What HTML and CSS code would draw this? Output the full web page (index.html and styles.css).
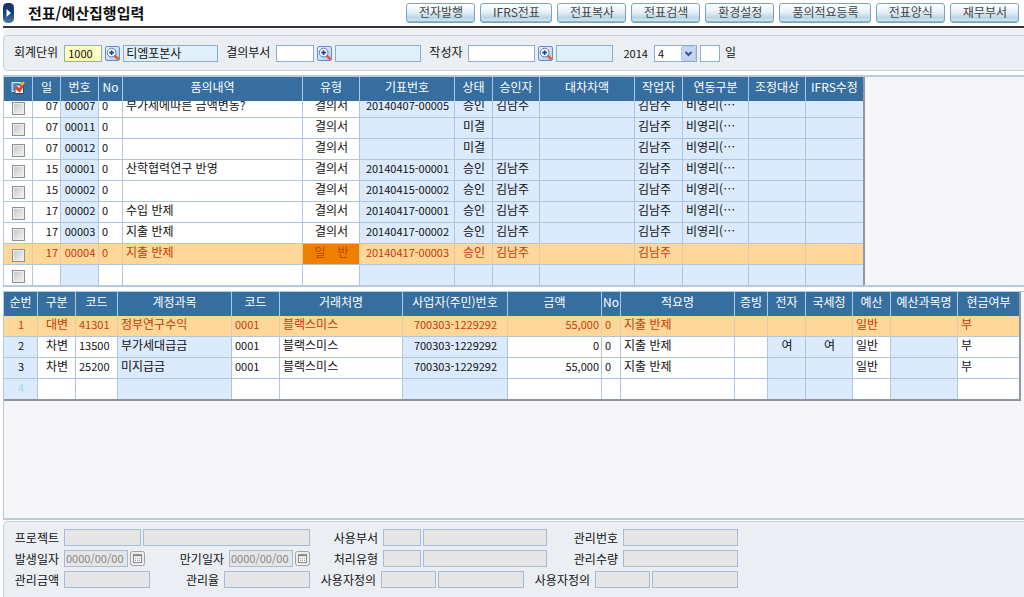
FILE: index.html
```html
<!DOCTYPE html>
<html lang="ko">
<head>
<meta charset="utf-8">
<title>전표/예산집행입력</title>
<link rel="stylesheet" href="styles.css">
</head>
<body>
<svg class="defs" width="0" height="0" aria-hidden="true">
  <defs>
    <linearGradient id="pill" x1="0" y1="0" x2="0" y2="1"><stop offset="0" stop-color="#1c2f66"/><stop offset="0.5" stop-color="#12407c"/><stop offset="1" stop-color="#4f7fb4"/></linearGradient>
    <linearGradient id="face" x1="0" y1="0" x2="1" y2="1"><stop offset="0" stop-color="#f4f9ff"/><stop offset="1" stop-color="#a9c8f2"/></linearGradient>
  </defs>
  <symbol id="search" viewBox="0 0 15 15">
    <rect x="0.5" y="0.5" width="14" height="14" rx="1.5" fill="url(#face)" stroke="#5c8ed2"/>
    <path d="M10 10l2.700 2.700" stroke="#e2621b" stroke-width="2.6" stroke-linecap="round"/>
    <circle cx="6.6" cy="6.6" r="4.4" fill="#fff" stroke="#4a76bd" stroke-width="1"/>
    <path d="M6.6 4.2v4.8M4.2 6.6h4.8" stroke="#1a3fa8" stroke-width="1.6"/>
  </symbol>
  <symbol id="calendar" viewBox="0 0 15 15">
    <rect x="0.5" y="0.5" width="14" height="14" rx="2" fill="#ececec" stroke="#a2a2a2"/>
    <rect x="3.5" y="3.5" width="8" height="8" fill="#fff" stroke="#8b8b8b"/>
    <path d="M3 4.5h9" stroke="#8b8b8b" stroke-width="1.5"/>
    <path d="M5 7.5h5M5 9.5h5" stroke="#999" stroke-dasharray="1 1"/>
  </symbol>
</svg>

<header class="top">
  <svg class="mark" width="11" height="20" viewBox="0 0 11 20" aria-hidden="true"><rect width="11" height="20" rx="4.5" fill="url(#pill)"/><path d="M3.5 6l4.5 4-4.500 4z" fill="#fff"/></svg>
  <h1>전표/예산집행입력</h1>
  <nav class="actions">
    <button>전자발행</button><button>IFRS전표</button><button>전표복사</button><button>전표검색</button><button>환경설정</button><button>품의적요등록</button><button>전표양식</button><button>재무부서</button>
  </nav>
</header>

<form class="filter">
  <label for="unit">회계단위</label>
  <div class="set"><input id="unit" class="w38 key" value="1000"><button type="button" class="icon" aria-label="회계단위 검색"><svg><use href="#search"/></svg></button><input class="w95 ro" value="티엠포본사" aria-label="회계단위명" readonly></div>
  <label for="dept">결의부서</label>
  <div class="set"><input id="dept" class="w38"><button type="button" class="icon" aria-label="결의부서 검색"><svg><use href="#search"/></svg></button><input class="w86 ro" aria-label="결의부서명" readonly></div>
  <label for="writer">작성자</label>
  <div class="set"><input id="writer" class="w67"><button type="button" class="icon" aria-label="작성자 검색"><svg><use href="#search"/></svg></button><input class="w57 ro" aria-label="작성자명" readonly></div>
  <span class="year">2014</span>
  <div class="set day"><span class="pick"><select aria-label="월"><option>4</option></select><svg class="arrow" width="15" height="15" viewBox="0 0 15 15" aria-hidden="true"><rect x="0.5" y="0.5" width="14" height="14" rx="1.5" fill="#c6d6fb" stroke="#b3c6ee"/><path d="M4.500 6l3 3 3-3" fill="none" stroke="#3c5286" stroke-width="2"/></svg></span><input id="day" class="w20"></div>
  <label for="day">일</label>
</form>

<section class="pane">
  <div class="grid vouchers">
    <table class="head">
      <colgroup><col class="c29"><col class="c28"><col class="c38"><col class="c24"><col class="c180"><col class="c57"><col class="c95"><col class="c38"><col class="c47"><col class="c95"><col class="c48"><col class="c66"><col class="c57"><col class="c57"></colgroup>
      <thead><tr><th><svg class="pickall" width="14" height="14" viewBox="0 0 14 14" role="img" aria-label="전체선택"><path d="M1 1.500h9v9H1z" fill="#5fa4e0" stroke="#cfe6fa"/><path d="M4 4h8.500v8.500H4z" fill="#f3f6fb" stroke="#274b78"/><path d="M4.500 6l4 3.500L12 3" fill="none" stroke="#e2401c" stroke-width="3"/><path d="M10.500 4l2.500-3" stroke="#ffb52e" stroke-width="2"/></svg></th><th>일</th><th>번호</th><th>No</th><th>품의내역</th><th>유형</th><th>기표번호</th><th>상태</th><th>승인자</th><th>대차차액</th><th>작업자</th><th>연동구분</th><th>조정대상</th><th>IFRS수정</th></tr></thead>
    </table>
    <div class="scroll">
    <table class="body">
      <colgroup><col class="c29"><col class="c28"><col class="c38"><col class="c24"><col class="c180"><col class="c57"><col class="c95"><col class="c38"><col class="c47"><col class="c95"><col class="c48"><col class="c66"><col class="c57"><col class="c57"></colgroup>
      <tbody>
      <tr><td><input type="checkbox" aria-label="선택"></td><td>07</td><td>00007</td><td>0</td><td>부가세에따른 금액변동?</td><td>결의서</td><td>20140407-00005</td><td>승인</td><td>김남주</td><td></td><td>김남주</td><td>비영리(⋯</td><td></td><td></td></tr>
      <tr><td><input type="checkbox" aria-label="선택"></td><td>07</td><td>00011</td><td>0</td><td></td><td>결의서</td><td></td><td>미결</td><td></td><td></td><td>김남주</td><td>비영리(⋯</td><td></td><td></td></tr>
      <tr><td><input type="checkbox" aria-label="선택"></td><td>07</td><td>00012</td><td>0</td><td></td><td>결의서</td><td></td><td>미결</td><td></td><td></td><td>김남주</td><td>비영리(⋯</td><td></td><td></td></tr>
      <tr><td><input type="checkbox" aria-label="선택"></td><td>15</td><td>00001</td><td>0</td><td>산학협력연구 반영</td><td>결의서</td><td>20140415-00001</td><td>승인</td><td>김남주</td><td></td><td>김남주</td><td>비영리(⋯</td><td></td><td></td></tr>
      <tr><td><input type="checkbox" aria-label="선택"></td><td>15</td><td>00002</td><td>0</td><td></td><td>결의서</td><td>20140415-00002</td><td>승인</td><td>김남주</td><td></td><td>김남주</td><td>비영리(⋯</td><td></td><td></td></tr>
      <tr><td><input type="checkbox" aria-label="선택"></td><td>17</td><td>00002</td><td>0</td><td>수입 반제</td><td>결의서</td><td>20140417-00001</td><td>승인</td><td>김남주</td><td></td><td>김남주</td><td>비영리(⋯</td><td></td><td></td></tr>
      <tr><td><input type="checkbox" aria-label="선택"></td><td>17</td><td>00003</td><td>0</td><td>지출 반제</td><td>결의서</td><td>20140417-00002</td><td>승인</td><td>김남주</td><td></td><td>김남주</td><td>비영리(⋯</td><td></td><td></td></tr>
      <tr class="sel"><td><input type="checkbox" aria-label="선택"></td><td>17</td><td>00004</td><td>0</td><td>지출 반제</td><td class="focus">일&emsp;반</td><td>20140417-00003</td><td>승인</td><td>김남주</td><td></td><td>김남주</td><td></td><td></td><td></td></tr>
      <tr><td><input type="checkbox" aria-label="선택"></td><td></td><td></td><td></td><td></td><td></td><td></td><td></td><td></td><td></td><td></td><td></td><td></td><td></td></tr>
      </tbody>
    </table>
    </div>
  </div>
</section>

<section class="pane lower">
  <div class="grid lines">
    <table class="head body">
      <colgroup><col class="c34"><col class="c38"><col class="c42"><col class="c114"><col class="c48"><col class="c123"><col class="c105"><col class="c94"><col class="c19"><col><col class="c33"><col class="c38"><col class="c47"><col class="c38"><col class="c67"><col class="c61"></colgroup>
      <thead><tr><th>순번</th><th>구분</th><th>코드</th><th>계정과목</th><th>코드</th><th>거래처명</th><th>사업자(주민)번호</th><th>금액</th><th>No</th><th>적요명</th><th>증빙</th><th>전자</th><th>국세청</th><th>예산</th><th>예산과목명</th><th>현금여부</th></tr></thead>
      <tbody>
      <tr class="sel"><td>1</td><td>대변</td><td>41301</td><td>정부연구수익</td><td>0001</td><td>블랙스미스</td><td>700303-1229292</td><td>55,000</td><td>0</td><td>지출 반제</td><td></td><td></td><td></td><td>일반</td><td></td><td>부</td></tr>
      <tr><td>2</td><td>차변</td><td>13500</td><td>부가세대급금</td><td>0001</td><td>블랙스미스</td><td>700303-1229292</td><td>0</td><td>0</td><td>지출 반제</td><td></td><td>여</td><td>여</td><td>일반</td><td></td><td>부</td></tr>
      <tr><td>3</td><td>차변</td><td>25200</td><td>미지급금</td><td>0001</td><td>블랙스미스</td><td>700303-1229292</td><td>55,000</td><td>0</td><td>지출 반제</td><td></td><td></td><td></td><td>일반</td><td></td><td>부</td></tr>
      <tr><td class="next">4</td><td></td><td></td><td></td><td></td><td></td><td></td><td></td><td></td><td></td><td></td><td></td><td></td><td></td><td></td><td></td></tr>
      </tbody>
    </table>
  </div>
</section>

<form class="detail">
  <div class="row">
    <div class="group g296"><label for="project">프로젝트</label><input id="project" class="w77" disabled><input class="w167" aria-label="프로젝트명" disabled></div>
    <div class="group g237"><label for="usedept">사용부서</label><input id="usedept" class="w38" disabled><input class="w124" aria-label="사용부서명" disabled></div>
    <div class="group g191"><label for="mno">관리번호</label><input id="mno" class="w115" disabled></div>
  </div>
  <div class="row">
    <div class="group g131"><label for="from">발생일자</label><input id="from" class="w64" value="0000/00/00" disabled><button type="button" class="icon" aria-label="발생일자 달력" disabled><svg><use href="#calendar"/></svg></button></div>
    <div class="group g165"><label for="due">만기일자</label><input id="due" class="w64" value="0000/00/00" disabled><button type="button" class="icon" aria-label="만기일자 달력" disabled><svg><use href="#calendar"/></svg></button></div>
    <div class="group g237"><label for="kind">처리유형</label><input id="kind" class="w38" disabled><input class="w124" aria-label="처리유형명" disabled></div>
    <div class="group g191"><label for="qty">관리수량</label><input id="qty" class="w115" disabled></div>
  </div>
  <div class="row">
    <div class="group g136"><label for="amt">관리금액</label><input id="amt" class="w86" disabled></div>
    <div class="group g160"><label for="rate">관리율</label><input id="rate" class="w86" disabled></div>
    <div class="group g214"><label for="ud1">사용자정의</label><input id="ud1" class="w55" disabled><input class="w86" aria-label="사용자정의명 1" disabled></div>
    <div class="group g214"><label for="ud2">사용자정의</label><input id="ud2" class="w55" disabled><input class="w86" aria-label="사용자정의명 2" disabled></div>
  </div>
</form>
</body>
</html>
```

FILE: styles.css
```css
* { box-sizing: border-box; }

html { height: 100%; }

body {
  margin: 0;
  padding-left: 3px;
  min-height: 100%;
  display: flex;
  flex-direction: column;
  background: #fff;
  color: #111;
  font: 12px/16px "Noto Sans CJK KR", sans-serif;
}

input, select, button { font: inherit; color: inherit; margin: 0; }
.defs { display: block; height: 0; }

/* title bar */
.top {
  display: flex;
  align-items: center;
  height: 28px;
  padding-right: 5px;
  border-bottom: 2px solid #33333f;
}
.top h1 {
  margin: 0 auto 0 14px;
  font-size: 15px;
  line-height: 20px;
  font-weight: bold;
}
.actions { display: flex; gap: 5px; }
.actions button {
  height: 20px;
  padding: 0 11px 3px 12px;
  border: 1px solid #7fa3bd;
  border-radius: 3px;
  background: linear-gradient(#fff 0%, #e6f1f8 45%, #b9d5e6 75%, #d5edf5 100%);
  box-shadow: inset 0 -1px #8fb3c9;
  color: #444;
  line-height: 14px;
}

/* search conditions */
.filter {
  display: flex;
  align-items: center;
  margin-top: 7px;
  height: 36px;
  padding-left: 10px;
  border: 1px solid #c2d0de;
  border-right: 0;
  border-radius: 5px 0 0 5px;
  background: #ebeef3;
  box-shadow: 0 -6px #eef0f4;
}
.filter label { line-height: 18px; padding-bottom: 2px; }
.set { display: flex; align-items: center; gap: 3px; margin: 0 8px 0 6px; }
.set.day { margin-right: 5px; }
.year { margin-left: 2px; font-size: 11px; }
input:not([type="checkbox"]), select {
  height: 17px;
  padding: 0 3px 1px;
  border: 1px solid #8fadd0;
  border-radius: 0;
  background: #fff;
  line-height: 14px;
}
input.key, .pick select { font-size: 11px; }
input.key { background: #ffffc4; }
input.ro { background: #e0f0fa; padding: 0 2px 1px; }
.icon {
  width: 15px;
  height: 15px;
  padding: 0;
  border: 0;
  background: none;
}
.icon svg { display: block; width: 15px; height: 15px; }
.pick { display: grid; width: 43px; }
.pick > * { grid-area: 1 / 1; }
.pick select { appearance: none; width: 43px; }
.arrow { place-self: center end; margin-right: 1px; pointer-events: none; }

.w20 { width: 20px; }
.w38 { width: 38px; }
.w55 { width: 55px; }
.w57 { width: 57px; }
.w64 { width: 64px; }
.w67 { width: 67px; }
.w77 { width: 77px; }
.w86 { width: 86px; }
.w95 { width: 95px; }
.w115 { width: 115px; }
.w124 { width: 124px; }
.w167 { width: 167px; }

/* grids */
.pane {
  display: flex;
  align-items: flex-start;
  margin-top: 4px;
  border: solid #b7cbdf;
  border-width: 2px 0 2px 1px;
  background: #f6f6f9;
}
.pane.lower { flex: 1; padding-right: 3px; border-top-width: 1px; }
.grid { border-right: 2px solid #8f9aa6; }
.lines { flex: 1; border-bottom: 2px solid #8f9498; }
.scroll { overflow: hidden; }
.scroll table { margin-top: -4px; }
table { table-layout: fixed; border-collapse: separate; border-spacing: 0; }
.vouchers table { width: 859px; }
.lines table { width: 100%; }
th {
  height: 24px;
  padding: 0 0 4px;
  border-right: 1px solid #a9cbe8;
  background: #366e9f;
  color: #fff;
  font-weight: normal;
  white-space: nowrap;
  overflow: hidden;
}
td {
  height: 21px;
  padding: 0 2px 4px 3px;
  border-right: 1px solid #aec6e0;
  border-bottom: 1px solid #aec6e0;
  background: #fff;
  white-space: nowrap;
  overflow: hidden;
}
th:last-child, td:last-child { border-right: 0; }
tbody tr:last-child td { height: 20px; border-bottom: 0; }
.vouchers td:first-child { padding-bottom: 2px; }
.pickall { display: block; margin: 2px auto 0; }

/* number columns */
.vouchers td:nth-child(2), .vouchers td:nth-child(3), .vouchers td:nth-child(4), .vouchers td:nth-child(7),
.lines td:nth-child(1), .lines td:nth-child(3), .lines td:nth-child(5),
.lines td:nth-child(7), .lines td:nth-child(8), .lines td:nth-child(9) {
  font-size: 11px;
}

.vouchers td:nth-child(1), .vouchers td:nth-child(3), .vouchers td:nth-child(6),
.vouchers td:nth-child(7), .vouchers td:nth-child(8) { text-align: center; }
.vouchers td:nth-child(2) { text-align: right; }
.vouchers td:nth-child(3), .vouchers td:nth-child(n+7) { background: #dbeafc; }

.lines td:nth-child(1), .lines td:nth-child(2), .lines td:nth-child(7),
.lines td:nth-child(12), .lines td:nth-child(13) { text-align: center; }
.lines td:nth-child(8) { text-align: right; }
.lines td:nth-child(1), .lines td:nth-child(4), .lines td:nth-child(7),
.lines td:nth-child(12), .lines td:nth-child(13), .lines td:nth-child(15) { background: #dbeafc; }
.lines td.next { color: #a5d8dc; }

.grid .sel td:nth-child(n) { background: #ffd799; color: #c23c06; border-right-color: #dfcbac; }
.grid .sel td.focus:nth-child(n) { background: #ee8000; }

input[type="checkbox"] {
  appearance: none;
  display: block;
  width: 13px;
  height: 13px;
  margin: 4px auto 0;
  border: 1px solid #8e8f8f;
  background: linear-gradient(135deg, #c4c6ca, #f5f5f5);
  box-shadow: inset 0 0 0 1px #eee;
}

.c19 { width: 19px; }
.c24 { width: 24px; }
.c28 { width: 28px; }
.c29 { width: 29px; }
.c33 { width: 33px; }
.c34 { width: 34px; }
.c38 { width: 38px; }
.c42 { width: 42px; }
.c47 { width: 47px; }
.c48 { width: 48px; }
.c57 { width: 57px; }
.c61 { width: 61px; }
.c66 { width: 66px; }
.c67 { width: 67px; }
.c94 { width: 94px; }
.c95 { width: 95px; }
.c105 { width: 105px; }
.c114 { width: 114px; }
.c123 { width: 123px; }
.c180 { width: 180px; }

/* management items */
.detail {
  display: flex;
  flex-direction: column;
  gap: 4px;
  margin-top: 1px;
  padding: 7px 0 9px 10px;
  border: solid #c2d0de;
  border-width: 1px 0 0 1px;
  border-radius: 5px 0 0 0;
  background: #ebeff4;
}
.row { display: flex; height: 17px; }
.group { display: flex; justify-content: flex-end; align-items: center; gap: 2px; }
.group label { margin-right: 3px; }
.detail input:not([type="checkbox"]) {
  padding: 0 1px 1px;
  border-color: #a5bcd9;
  background: #e6e6e6;
  color: #888;
  font-size: 11px;
}
.g131 { width: 131px; }
.g136 { width: 136px; }
.g160 { width: 160px; }
.g165 { width: 165px; }
.g191 { width: 191px; }
.g214 { width: 214px; }
.g237 { width: 237px; }
.g296 { width: 296px; }
```
